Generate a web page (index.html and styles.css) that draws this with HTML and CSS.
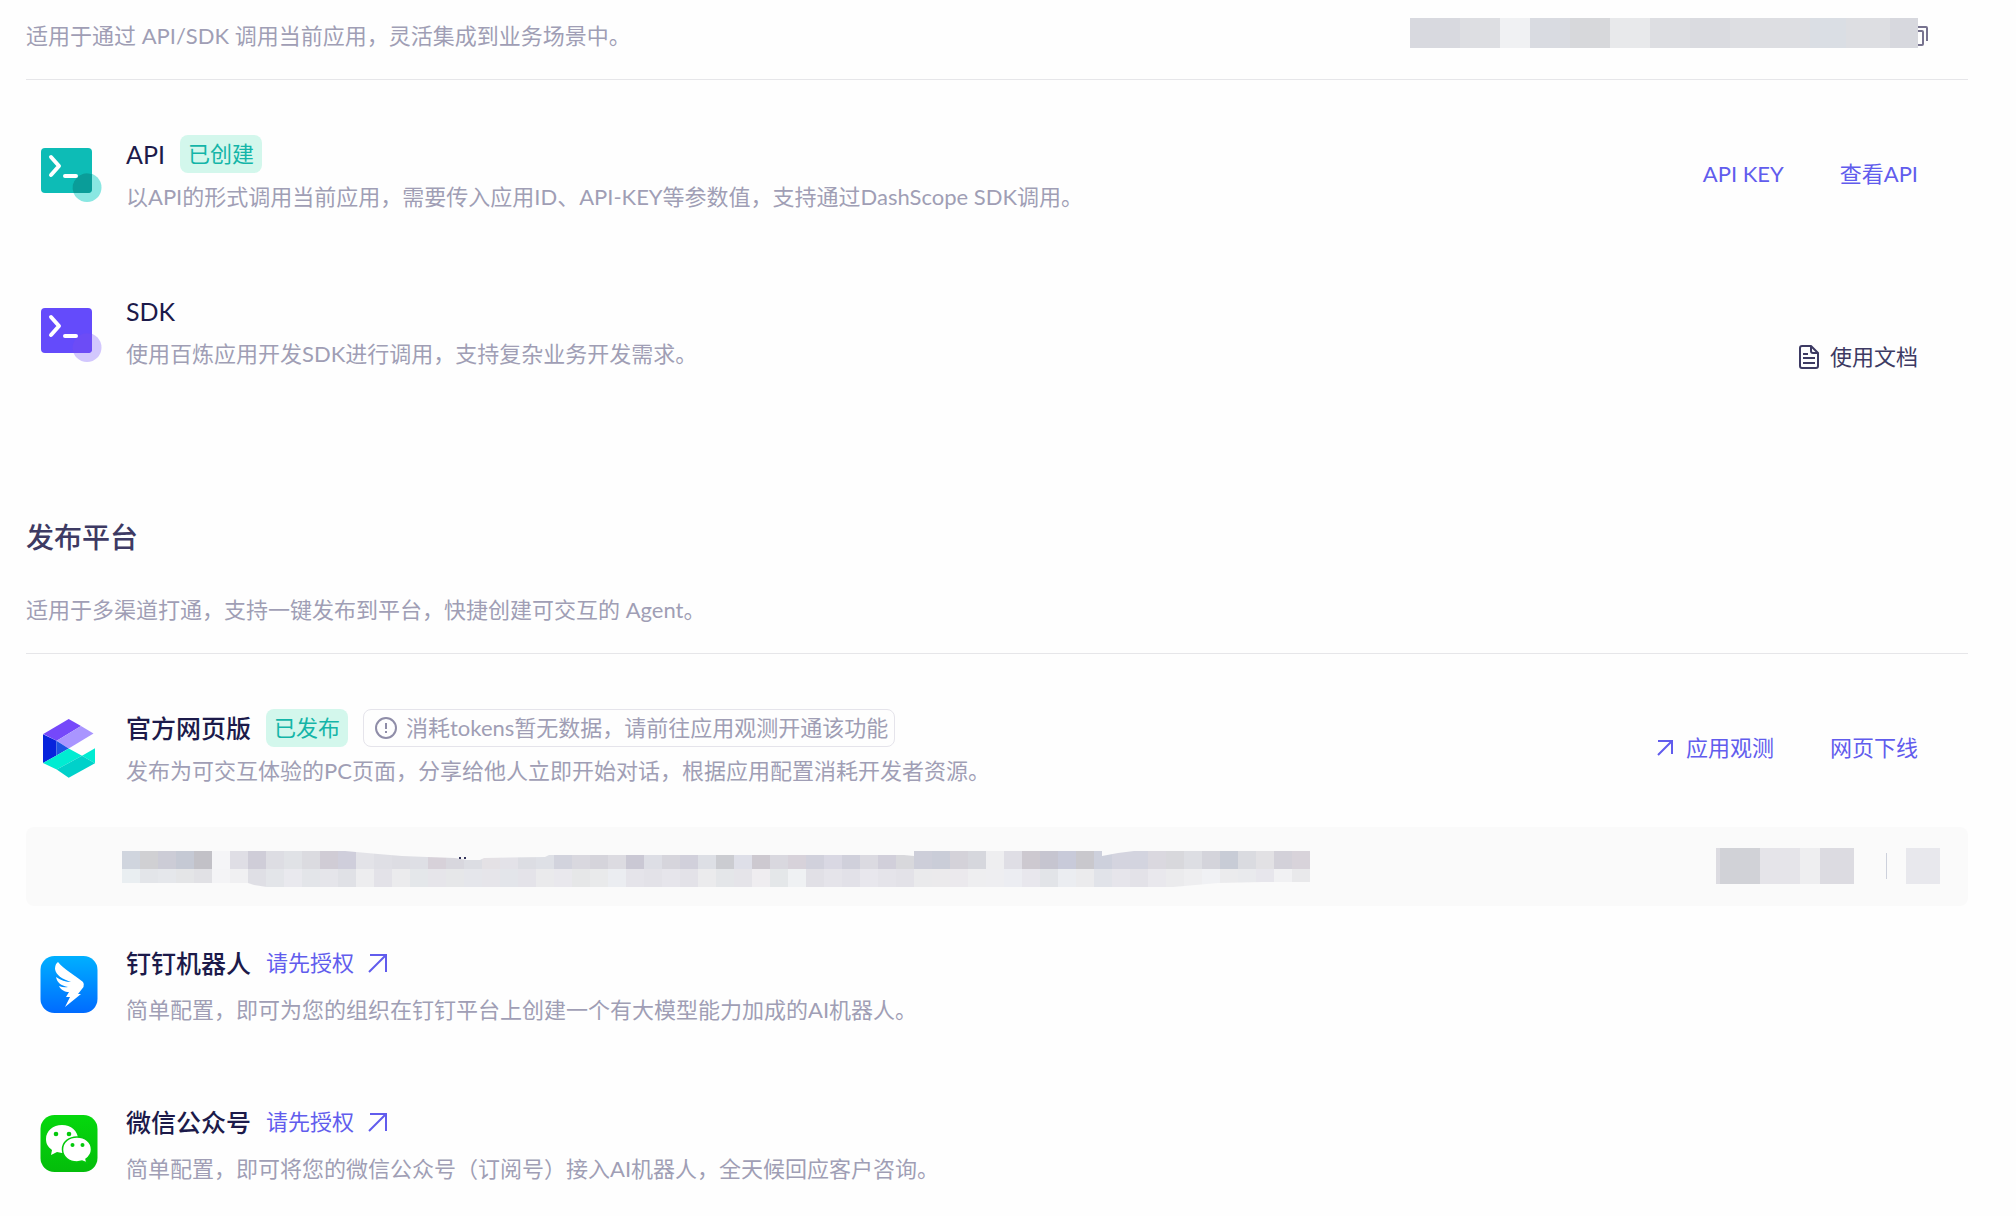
FILE: index.html
```html
<!DOCTYPE html>
<html lang="zh-CN">
<head>
  <meta charset="UTF-8" />
  <meta name="viewport" content="width=device-width, initial-scale=1.0" />
  <title>发布渠道</title>
  <link rel="stylesheet" href="styles.css">
</head>
<body>
  <section class="section">
    <div class="intro">
      <p class="desc">适用于通过 API/SDK 调用当前应用，灵活集成到业务场景中。</p>
      <div class="app-id">
        <svg width="518" height="30" viewBox="0 0 518 30" aria-hidden="true">
          <g fill="none" stroke="#77738f" stroke-width="2">
            <path d="M500 9h16q1 0 1 1v13" />
            <path d="M500 13h12q1 0 1 1v12q0 1-1 1h-12" />
          </g>
          <rect width="508" height="30" fill="#dddee2" />
          <rect width="50" height="30" fill="#d8d9df" />
          <rect x="90" width="30" height="30" fill="#f0f1f3" />
          <rect x="120" width="40" height="30" fill="#d9dbe1" />
          <rect x="160" width="40" height="30" fill="#d7d8db" />
          <rect x="200" width="40" height="30" fill="#e8e9eb" />
          <rect x="280" width="40" height="30" fill="#dadbe0" />
          <rect x="400" width="36" height="30" fill="#dadee4" />
          <rect x="480" width="28" height="30" fill="#d7d8de" />
        </svg>
      </div>
    </div>

    <div class="channel">
      <svg class="channel-icon" width="62" height="56" viewBox="0 -2 62 56" aria-hidden="true">
        <rect x="1" width="51" height="45" rx="4" fill="#0dbcb6" />
        <circle cx="47" cy="39.500" r="14.500" fill="#14cfc6" fill-opacity=".5" />
        <path d="M52 26.200A14.500 14.500 0 0 0 33.600 45H48q4 0 4-4z" fill="#0a9d99" />
        <path d="M11 9l8 9-8 9M25 28h11" fill="none" stroke="#fff" stroke-width="4" stroke-linecap="round" stroke-linejoin="round" />
      </svg>
      <div class="channel-text">
        <div class="title-row">
          <h3>API</h3>
          <span class="tag">已创建</span>
        </div>
        <p class="desc">以API的形式调用当前应用，需要传入应用ID、API-KEY等参数值，支持通过DashScope SDK调用。</p>
      </div>
      <div class="actions">
        <a href="#">API KEY</a>
        <a href="#">查看API</a>
      </div>
    </div>

    <div class="channel channel-sdk">
      <svg class="channel-icon" width="62" height="56" viewBox="0 -2 62 56" aria-hidden="true">
        <circle cx="47" cy="39.500" r="14.500" fill="#d2c7fd" />
        <rect x="1" width="51" height="45" rx="4" fill="#644bfb" />
        <path d="M52 26.200A14.500 14.500 0 0 0 33.600 45H48q4 0 4-4z" fill="#6c4cf6" />
        <path d="M11 9l8 9-8 9M25 28h11" fill="none" stroke="#fff" stroke-width="4" stroke-linecap="round" stroke-linejoin="round" />
      </svg>
      <div class="channel-text">
        <div class="title-row">
          <h3>SDK</h3>
        </div>
        <p class="desc">使用百炼应用开发SDK进行调用，支持复杂业务开发需求。</p>
      </div>
      <div class="actions">
        <a class="doc-link" href="#">
          <svg width="20" height="24" viewBox="0 0 20 24" fill="none" stroke="#3d3a63" stroke-width="2" aria-hidden="true">
            <path d="M12 1H3Q1 1 1 3v18q0 2 2 2h14q2 0 2-2V8zM12 1v5q0 2 2 2h5" stroke-linejoin="round" />
            <path d="M4 9h5M4 13h12M4 18h12" />
          </svg>
          使用文档
        </a>
      </div>
    </div>
  </section>

  <section class="section platform">
    <h2>发布平台</h2>
    <div class="intro">
      <p class="desc">适用于多渠道打通，支持一键发布到平台，快捷创建可交互的 Agent。</p>
    </div>

    <div class="channel">
      <svg class="channel-icon" width="62" height="59" viewBox="0 0 62 59" aria-hidden="true">
        <path d="M28.700 0L41 7 16.700 21.700 3.300 15z" fill="#7548fa" />
        <path d="M41 7l12.500 7.400-24.800 15-12-7.700z" fill="#a995ff" />
        <path d="M3 15.200l13.500 6.500v14.800L3 44z" fill="#0723dc" />
        <path d="M16.500 21.700l12.200 7.700-12.200 7.100z" fill="#1c53e3" />
        <path d="M28.700 29.400L42 36.800 16.700 50.500 3 44l13.500-7.500z" fill="#00ecd2" />
        <path d="M42 36.800l13-7.500v15z" fill="#00ecd2" />
        <path d="M42 36.800l13 7.500-26.300 14.500-12-8.300z" fill="#00d1ca" />
      </svg>
      <div class="channel-text">
        <div class="title-row">
          <h3>官方网页版</h3>
          <span class="tag">已发布</span>
          <span class="hint">
            <svg width="22" height="22" viewBox="0 0 22 22" fill="none" stroke="#8f8da8" stroke-width="2" aria-hidden="true">
              <circle cx="11" cy="11" r="10" />
              <path d="M11 6v6M11 14v2" />
            </svg>
            消耗tokens暂无数据，请前往应用观测开通该功能
          </span>
        </div>
        <p class="desc">发布为可交互体验的PC页面，分享给他人立即开始对话，根据应用配置消耗开发者资源。</p>
      </div>
      <div class="actions">
        <a href="#">
          <svg width="16" height="16" viewBox="0 0 16 16" fill="none" stroke="currentColor" stroke-width="2" aria-hidden="true">
            <path d="M1 15L15 1M1 1h14v13" />
          </svg>
          应用观测
        </a>
        <a href="#">网页下线</a>
      </div>
    </div>

    <div class="url-bar">
      <svg class="url-mask" width="1188" height="36" viewBox="0 0 1188 36" aria-hidden="true">
        <g id="urlCells"></g>
        <path class="cover" d="M223 0l33 3 24 2 25 1 28 1 12 2h13l4-2 61-1 4-2h355l10 1V0zM980 0v5l16-3 16-2zM0 32h126l6 2 13 2H0zM1051 36l45-4 45-1h47v5z" />
        <path d="M337 6h2v2h-2zM342 6h2v2h-2z" fill="#34345c" />
      </svg>
      <div class="url-tools">
        <svg width="138" height="36" viewBox="0 0 138 36" aria-hidden="true">
          <rect width="138" height="36" fill="#dcdbe1" />
          <rect x="4" width="40" height="36" fill="#d1d2d7" />
          <rect x="44" width="40" height="36" fill="#e5e4e9" />
          <rect x="84" width="20" height="36" fill="#eeeef0" />
        </svg>
        <span class="url-divider"></span>
        <svg width="34" height="36" viewBox="0 0 34 36" aria-hidden="true">
          <rect width="34" height="36" fill="#e8e8ed" />
        </svg>
      </div>
    </div>

    <div class="channel channel-auth">
      <svg class="channel-icon" width="62" height="58" viewBox="0 0 62 58" aria-hidden="true">
        <defs>
          <linearGradient id="dingBg" x1="0" y1="0" x2="0" y2="1">
            <stop offset="0" stop-color="#00b0ff" />
            <stop offset="1" stop-color="#006bff" />
          </linearGradient>
        </defs>
        <rect x=".5" width="57" height="57" rx="14" fill="url(#dingBg)" />
        <path d="M18 6c5 7 17 13 25 20q1.500 2 .5 5L38 38h3L25 51l5-10h-4l3-5c-4 0-8-2-10-6q5 2 9 1c-6-1-11-4-12-10q7 5 15 5c-9-3-15-7-16-13q0-5 3-7z" fill="#fff" />
      </svg>
      <div class="channel-text">
        <div class="title-row">
          <h3>钉钉机器人</h3>
          <a class="auth-link" href="#">请先授权
            <svg width="20" height="20" viewBox="0 0 20 20" fill="none" stroke="currentColor" stroke-width="2" aria-hidden="true">
              <path d="M1 19L18 2M2 2h16v17" />
            </svg>
          </a>
        </div>
        <p class="desc">简单配置，即可为您的组织在钉钉平台上创建一个有大模型能力加成的AI机器人。</p>
      </div>
    </div>

    <div class="channel channel-auth">
      <svg class="channel-icon" width="62" height="58" viewBox="0 0 62 58" aria-hidden="true">
        <defs>
          <linearGradient id="wechatBg" x1="0" y1="0" x2="0" y2="1">
            <stop offset="0" stop-color="#05d80d" />
            <stop offset="1" stop-color="#04bd0b" />
          </linearGradient>
        </defs>
        <rect x=".5" width="57" height="57" rx="14" fill="url(#wechatBg)" />
        <path d="M22 10C13 10 6 16 6 24c0 5 2 8 6 11l-1 5 6-3 5 1c9 0 16-6 16-14s-7-14-16-14z" fill="#fff" />
        <path d="M37 22c-8 0-14.500 5-14.500 12.500S29 47 37 47l5-1 5 2-1-4c3-2 5.500-5 5.500-9.500C51.500 27 45 22 37 22z" fill="#fff" stroke="#04c90c" stroke-width="1.500" />
        <g fill="#04c90c">
          <circle cx="16" cy="19" r="2.300" />
          <circle cx="29" cy="19" r="2.300" />
          <circle cx="32.500" cy="30" r="2" />
          <circle cx="42.500" cy="30" r="2" />
        </g>
      </svg>
      <div class="channel-text">
        <div class="title-row">
          <h3>微信公众号</h3>
          <a class="auth-link" href="#">请先授权
            <svg width="20" height="20" viewBox="0 0 20 20" fill="none" stroke="currentColor" stroke-width="2" aria-hidden="true">
              <path d="M1 19L18 2M2 2h16v17" />
            </svg>
          </a>
        </div>
        <p class="desc">简单配置，即可将您的微信公众号（订阅号）接入AI机器人，全天候回应客户咨询。</p>
      </div>
    </div>
  </section>

  <script>
    // mosaic over the published url, 18px cells in two rows
    const rows = [
      'd0d5de d0d0d3 ccccd6 c5c9d4 c2c1c7 f5f5f7 dfdee5 cfcdd8 dddde3 e0e2e6 dbdbe0 d0ccd5 cfcedb e3e3e8 dfdfe5 dddde3 dedfe5 d7d1d9 d8d7de dcdde3 e4e1e5 e3e2e8 dcdde3 dee0e6 d2d3dd d9d8df d5d4db dcdbe1 cac8d4 dddee5 d6d5dc d1d0db dddfe5 cbccd1 dedfe8 cdc9d0 d9d8df d7d2da d1d1dc d9d8e3 d0d0db dbdae1 d1cfda d8d8dc cdced9 cacdd8 d4d2d9 d6d7dd eeeef0 dfdee5 cdc9d0 c6c5d0 c8cad9 c9c8cd cdd0dc d4d4df d3d4df dad8df d8d8dc dddee3 d4d4db c8ccd6 dadbe0 e2e1e4 d3d1d9 d8d3da',
      'e9eef1 e3e5e9 e5e7eb e4e5e7 e1e1e5 f4f4f6 f0f0f2 dfdfe5 e3e5e9 e9e9ee e3e5e9 e5e5ea e0e1e6 ededef e3e2e8 ebebed e4e7ea e6e5ea e6e7e9 e5e6eb e6e5ea e3e5ea e4e3e9 eaeaec e9e8ed e6e7e8 e9eaeb ebedf1 e5e4ea e3e2e8 e6e5eb e3e2e8 ebebed e4e6e9 e5e4e9 efedf0 e4e7e9 eff1f3 e1e0e6 e5e4ea e2e1e8 e8e7ed e5e4ea e3e2e8 eaeaec ebeaec ebe9ed eeeef0 eeeef1 ecedf2 e8e7ed e2e4e8 ebedf1 ebebed e1e3e9 e6e5eb e3e2e8 e9e8ed ebebed eeeef0 f0f1f4 ebebed e9eaed e7e6ec f1f1f3 e9e9eb'
    ];
    const cells = document.getElementById('urlCells');
    rows.forEach((row, y) => {
      row.split(' ').forEach((color, x) => {
        const rect = document.createElementNS('http://www.w3.org/2000/svg', 'rect');
        rect.setAttribute('x', x * 18);
        rect.setAttribute('y', y * 18);
        rect.setAttribute('width', 18);
        rect.setAttribute('height', 18);
        rect.setAttribute('fill', `#${color}`);
        cells.appendChild(rect);
      });
    });
  </script>
</body>
</html>
```

FILE: styles.css
```css
* {
  box-sizing: border-box;
}
body {
  margin: 0;
  padding: 0 48px 30px 26px;
  background-color: #fefefe;
  color: #26244c;
  font-family: Lato, 'Noto Sans CJK SC', sans-serif;
  font-size: 22px;
  line-height: 32px;
}
h2, h3, p {
  margin: 0;
}
h2 {
  color: #3d3a63;
  font-size: 28px;
  font-weight: 500;
  line-height: 40px;
  margin-bottom: 37px;
}
h3 {
  color: #1c1a4a;
  font-size: 25px;
  font-weight: 400;
}
a {
  color: #615ced;
  text-decoration: none;
}
svg {
  display: block;
  flex-shrink: 0;
}
.platform {
  margin-top: 144px;
}
.platform h3 {
  font-weight: 500;
}
.desc, .hint {
  color: #a09eb5;
}
.intro {
  padding-bottom: 27px;
  border-bottom: 1px solid #e6e6e9;
  margin-bottom: 55px;
}
.section:first-child .intro {
  display: flex;
  align-items: center;
  justify-content: space-between;
  padding-top: 20px;
}
.app-id {
  margin: -6px 40px 0 0;
}
.channel {
  display: flex;
  align-items: center;
  min-height: 78px;
  padding: 0 50px 0 14px;
}
.channel-icon {
  margin-right: 24px;
}
.channel-text {
  flex: 1;
  align-self: flex-start;
}
.title-row {
  display: flex;
  align-items: center;
  gap: 15px;
  margin-bottom: 8px;
}
.tag {
  padding: 3px 8px;
  border-radius: 8px;
  background-color: #d3f7ec;
  color: #14b5a8;
}
.hint {
  display: flex;
  align-items: center;
  gap: 9px;
  padding: 2px 6px 2px 11px;
  border: 1px solid #e5e4eb;
  border-radius: 8px;
}
.actions {
  display: flex;
  gap: 56px;
}
.actions a {
  display: flex;
  align-items: center;
  gap: 13px;
}
.actions .doc-link {
  gap: 11px;
  color: #3d3a63;
}
.channel-sdk {
  margin-top: 82px;
}
.channel-sdk .title-row {
  margin-bottom: 11px;
}
.channel-sdk .actions {
  align-self: flex-end;
}
.url-bar {
  display: flex;
  align-items: center;
  justify-content: space-between;
  margin: 40px 0 38px;
  padding: 18px 28px 19px 96px;
  border-radius: 8px;
  background-color: #fafafa;
}
.url-mask {
  margin-top: 6px;
}
.cover {
  fill: #fafafa;
}
.url-tools {
  display: flex;
  align-items: center;
}
.url-divider {
  width: 1px;
  height: 26px;
  margin: 0 19px 0 32px;
  background-color: #cdd1dc;
}
.channel-auth .title-row {
  min-height: 38px;
  margin-bottom: 12px;
}
.channel-auth + .channel-auth {
  margin-top: 77px;
}
.auth-link {
  display: flex;
  align-items: center;
  gap: 14px;
}
```
